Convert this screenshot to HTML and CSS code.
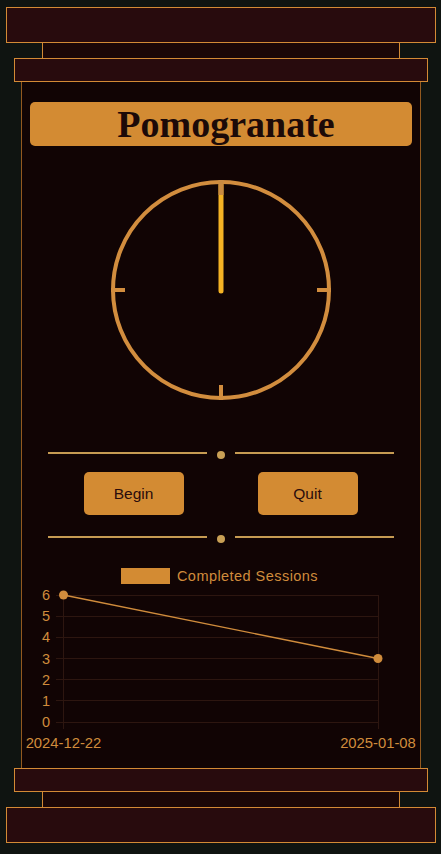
FILE: index.html
```html
<!DOCTYPE html>
<html lang="en">
<head>
<meta charset="utf-8">
<title>Pomogranate</title>
<link rel="stylesheet" href="styles.css">
</head>
<body>
<div class="frame">
  <div class="cap-outer"></div>
  <div class="cap-neck"></div>
  <div class="cap-inner"></div>
  <main class="main">
    <h1 class="title">Pomogranate</h1>
    <svg class="clock" width="224" height="224" viewBox="0 0 224 224">
      <circle cx="112" cy="112" r="108" fill="none" stroke="#d28d3e" stroke-width="4"/>
      <line x1="112" y1="113" x2="112" y2="7" stroke="#f5b324" stroke-width="5" stroke-linecap="round"/>
      <line x1="112" y1="2" x2="112" y2="17" stroke="#c98b42" stroke-width="5"/>
      <line x1="112" y1="207" x2="112" y2="222" stroke="#d28d3e" stroke-width="4"/>
      <line x1="2" y1="112" x2="16" y2="112" stroke="#d28d3e" stroke-width="4"/>
      <line x1="208" y1="112" x2="222" y2="112" stroke="#d28d3e" stroke-width="4"/>
    </svg>
    <div class="divider divider-top"><span class="rule"></span><span class="dot"></span><span class="rule"></span></div>
    <div class="actions">
      <button class="btn">Begin</button>
      <button class="btn">Quit</button>
    </div>
    <div class="divider divider-bottom"><span class="rule"></span><span class="dot"></span><span class="rule"></span></div>
    <div class="legend"><span class="legend-box"></span><span class="legend-text">Completed Sessions</span></div>
    <svg class="chart" width="398" height="170" viewBox="0 0 398 170">
      <g stroke="#2d1610" stroke-width="1">
        <line x1="34" y1="7.5" x2="356" y2="7.5"/>
        <line x1="34" y1="28.5" x2="356" y2="28.5"/>
        <line x1="34" y1="49.5" x2="356" y2="49.5"/>
        <line x1="34" y1="70.5" x2="356" y2="70.5"/>
        <line x1="34" y1="91.5" x2="356" y2="91.5"/>
        <line x1="34" y1="112.5" x2="356" y2="112.5"/>
        <line x1="34" y1="134.5" x2="356" y2="134.5"/>
        <line x1="41.5" y1="7" x2="41.5" y2="141"/>
        <line x1="356.5" y1="7" x2="356.5" y2="141"/>
      </g>
      <g fill="#d08c3c" font-family="Liberation Sans, Arial, sans-serif" font-size="14.5" text-anchor="end">
        <text x="28" y="12">6</text>
        <text x="28" y="33">5</text>
        <text x="28" y="54">4</text>
        <text x="28" y="75.5">3</text>
        <text x="28" y="96.5">2</text>
        <text x="28" y="117.5">1</text>
        <text x="28" y="139">0</text>
      </g>
      <g fill="#d08c3c" font-family="Liberation Sans, Arial, sans-serif" font-size="14.8" text-anchor="middle">
        <text x="41.5" y="160">2024-12-22</text>
        <text x="356" y="160">2025-01-08</text>
      </g>
      <line x1="41.5" y1="7" x2="356" y2="70.5" stroke="#d08c3c" stroke-width="1.3"/>
      <circle cx="41.5" cy="7" r="4.5" fill="#d08c3c"/>
      <circle cx="356" cy="70.5" r="4.5" fill="#d08c3c"/>
    </svg>
  </main>
  <div class="cap-inner"></div>
  <div class="cap-neck"></div>
  <div class="cap-outer"></div>
</div>
</body>
</html>
```
FILE: styles.css
```css
html, body {
  margin: 0;
  padding: 0;
}
body {
  background: #0f1411;
  font-family: "Liberation Sans", Arial, sans-serif;
}
.frame {
  display: flex;
  flex-direction: column;
  align-items: center;
  padding-top: 7px;
}
.cap-outer {
  box-sizing: border-box;
  width: 430px;
  height: 36px;
  border: 1px solid #d38a35;
  background: #280b0d;
}
.cap-neck {
  box-sizing: border-box;
  width: 358px;
  height: 15px;
  border-left: 1px solid #d38a35;
  border-right: 1px solid #d38a35;
  background: #1b0707;
}
.cap-inner {
  box-sizing: border-box;
  width: 414px;
  height: 24px;
  border: 1px solid #d38a35;
  background: #280b0d;
}
.main {
  box-sizing: border-box;
  width: 400px;
  height: 686px;
  border-left: 1px solid #93591f;
  border-right: 1px solid #93591f;
  background: #110404;
  padding: 20px 8px 0;
  display: flex;
  flex-direction: column;
  align-items: center;
}
.title {
  box-sizing: border-box;
  margin: 0;
  width: 100%;
  height: 44px;
  background: #d38b33;
  border-radius: 5px;
  color: #1c0a08;
  font-family: "Liberation Serif", "Times New Roman", serif;
  font-weight: bold;
  font-size: 38px;
  line-height: 44px;
  text-align: center;
  padding-left: 11px;
}
.clock {
  display: block;
  margin-top: 32px;
}
.divider {
  display: flex;
  align-items: flex-start;
  width: 346px;
  height: 8px;
}
.divider-top {
  margin-top: 49px;
}
.divider-bottom {
  margin-top: 20px;
}
.rule {
  flex: 1;
  height: 2px;
  margin-top: 1px;
  background: #c69b52;
}
.dot {
  width: 8px;
  height: 8px;
  border-radius: 50%;
  background: #c9a055;
  margin: 0 10px;
}
.actions {
  display: flex;
  gap: 74px;
  margin-top: 13px;
}
.btn {
  width: 100px;
  height: 43px;
  border: none;
  border-radius: 5px;
  background: #d38b33;
  color: #2a0c0c;
  font-family: "Liberation Sans", Arial, sans-serif;
  font-size: 15.5px;
  padding: 0;
  cursor: pointer;
}
.legend {
  display: flex;
  align-items: center;
  gap: 7px;
  margin-top: 25px;
  height: 16px;
  padding-right: 2px;
}
.legend-box {
  width: 49px;
  height: 16px;
  background: #d38b33;
}
.legend-text {
  color: #d08c3c;
  font-size: 14.5px;
  letter-spacing: 0.45px;
}
.chart {
  display: block;
  margin-top: 4px;
}
```
